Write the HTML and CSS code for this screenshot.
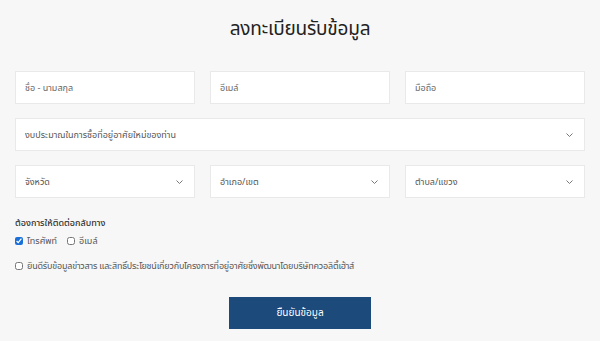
FILE: index.html
```html
<!DOCTYPE html>
<html lang="th">
<head>
    <meta charset="UTF-8">
    <meta name="viewport" content="width=device-width, initial-scale=1.0">
    <title>ลงทะเบียนรับข้อมูล</title>
    <link rel="stylesheet" href="styles.css">
</head>
<body>
    <form class="register" onsubmit="return false;">
        <h1 class="title">ลงทะเบียนรับข้อมูล</h1>

        <div class="row">
            <input class="field" type="text" name="fullname" placeholder="ชื่อ - นามสกุล">
            <input class="field" type="email" name="email" placeholder="อีเมล์">
            <input class="field" type="tel" name="mobile" placeholder="มือถือ">
        </div>

        <div class="row row-single">
            <select class="field select" name="budget">
                <option>งบประมาณในการซื้อที่อยู่อาศัยใหม่ของท่าน</option>
            </select>
        </div>

        <div class="row">
            <select class="field select" name="province">
                <option>จังหวัด</option>
            </select>
            <select class="field select" name="district">
                <option>อำเภอ/เขต</option>
            </select>
            <select class="field select" name="subdistrict">
                <option>ตำบล/แขวง</option>
            </select>
        </div>

        <p class="contact-label">ต้องการให้ติดต่อกลับทาง</p>
        <div class="check-row">
            <label class="check"><input type="checkbox" name="by_phone" checked> โทรศัพท์</label>
            <label class="check"><input type="checkbox" name="by_email"> อีเมล์</label>
        </div>

        <div class="check-row consent">
            <label class="check"><input type="checkbox" name="consent"> ยินดีรับข้อมูลข่าวสาร และสิทธิ์ประโยชน์เกี่ยวกับโครงการที่อยู่อาศัยซึ่งพัฒนาโดยบริษัทควอลิตี้เฮ้าส์</label>
        </div>

        <div class="actions">
            <button type="submit" class="submit">ยืนยันข้อมูล</button>
        </div>
    </form>
</body>
</html>
```

FILE: styles.css
```css
body {
    font-family: "Noto Sans Thai", "Noto Sans", "DejaVu Sans", sans-serif;
    background-color: #f7f7f7;
    color: #333;
    margin: 0;
    padding: 0;
}

.register {
    padding: 12px 15px 0;
}

.title {
    margin: 0 0 23px;
    font-size: 19px;
    font-weight: 400;
    line-height: 36px;
    letter-spacing: -0.2px;
    text-align: center;
    color: #222;
}

.row {
    display: grid;
    grid-template-columns: repeat(3, 1fr);
    gap: 15px;
    margin-bottom: 14px;
}

.row-single {
    grid-template-columns: 1fr;
}

.field {
    box-sizing: border-box;
    width: 100%;
    height: 33px;
    margin: 0;
    padding: 0 9px;
    background-color: #fff;
    border: 1px solid #e9e9e9;
    border-radius: 0;
    font-family: inherit;
    font-size: 9px;
    color: #555;
    outline: none;
}

.field::placeholder {
    color: #666;
}

.select {
    appearance: none;
    -webkit-appearance: none;
    background-image: url("data:image/svg+xml,%3Csvg xmlns='http://www.w3.org/2000/svg' width='7' height='4' viewBox='0 0 7 4'%3E%3Cpath d='M0.5 0.5l3 3 3-3' fill='none' stroke='%23777' stroke-width='1'/%3E%3C/svg%3E");
    background-repeat: no-repeat;
    background-position: right 11px center;
}

.contact-label {
    margin: 18px 0 4px;
    font-size: 9px;
    font-weight: 500;
    line-height: 14px;
    color: #333;
}

.check-row {
    display: flex;
    gap: 10px;
    font-size: 9px;
    line-height: 14px;
    color: #555;
}

.check {
    display: flex;
    align-items: center;
    gap: 4px;
}

.check input {
    width: 8px;
    height: 8px;
    margin: 0;
    accent-color: #1a6fd8;
}

.consent {
    margin-top: 11px;
    letter-spacing: -0.2px;
}

.actions {
    display: flex;
    justify-content: center;
    margin-top: 24px;
}

.submit {
    width: 142px;
    height: 32px;
    background-color: #1c4a7b;
    color: #fff;
    border: none;
    font-family: inherit;
    font-size: 10px;
    cursor: pointer;
}

.submit:hover {
    background-color: #163c64;
}
```
